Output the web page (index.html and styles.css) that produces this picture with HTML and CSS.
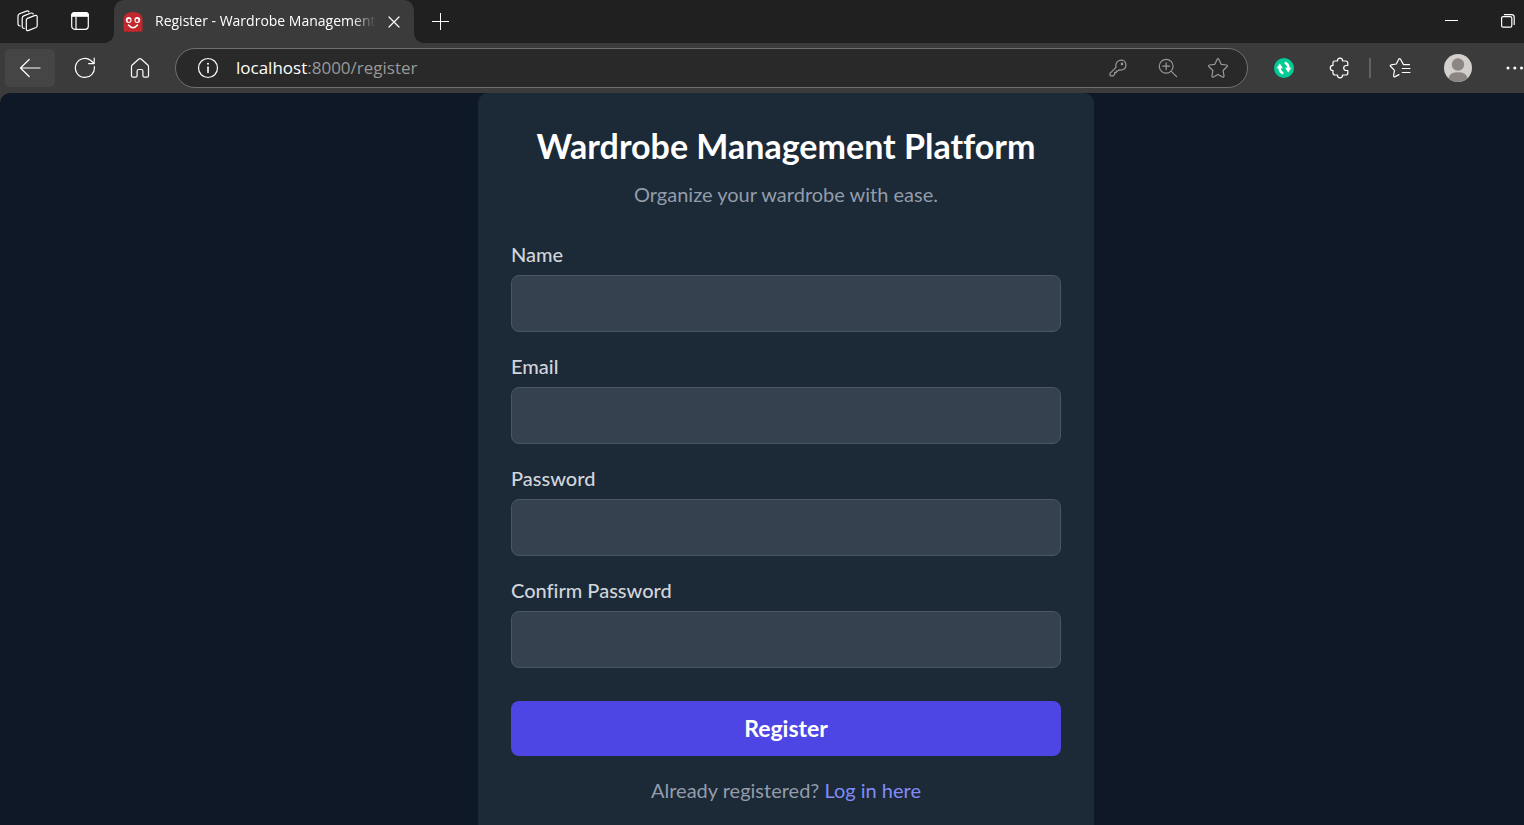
FILE: index.html
```
<!DOCTYPE html>
<html lang="en">
<head>
<meta charset="utf-8">
<meta name="viewport" content="width=device-width, initial-scale=1">
<title>Register - Wardrobe Management Platform</title>
<link rel="stylesheet" href="styles.css">
</head>
<body>
<div class="browser">
  <header class="tab-strip">
    <button class="strip-button" aria-label="Workspaces">
      <svg class="icon" width="24" height="24" viewBox="0 0 24 24"><path d="M11.500 9.400 18.500 6.600Q21.200 5.700 21.200 8V16.500Q21.200 17.900 20 18.500L12.700 21.400Q10.300 22.100 10.300 20V11.200Q10.300 10 11.500 9.400Z"/><path d="M8.300 19.300Q6.200 19.400 6.200 17.300V9.200Q6.200 7.600 7.700 6.900L14.500 4.200Q16.300 3.600 17.200 4.900"/><path d="M4.200 17Q2 16.900 2 14.800V7Q2 5.500 3.500 4.800L10.400 2.100Q12.100 1.500 13 2.800"/></svg>
    </button>
    <button class="strip-button strip-button-wide" aria-label="Tab actions">
      <svg class="icon" width="20" height="20" viewBox="0 0 20 20"><rect x="1.700" y="1.700" width="16.600" height="16.600" rx="3"/><path class="solid" d="M1.700 5.200V4.500Q1.700 1.700 4.500 1.700H15.500Q18.300 1.700 18.300 4.500V5.200Z"/><path d="M6 6V18"/></svg>
    </button>
    <div class="tab">
      <svg class="favicon" width="20" height="20" viewBox="0 0 20 20"><path fill="#c1272d" d="M.500 8Q.500 0 10 0T19.500 8V18.500Q18 21 15.800 19Q14 21 12.500 19.300Q10 21 8 19.300Q6 21 4.200 19Q2 21 .500 18.500Z"/><circle cx="5.700" cy="8" r="2.900" fill="#fff"/><circle cx="14.300" cy="8" r="2.900" fill="#fff"/><circle cx="6" cy="8.500" r="1.400" fill="#c1272d"/><circle cx="14" cy="8.500" r="1.400" fill="#c1272d"/><path d="M5.500 13Q10 18.500 14.500 13" fill="none" stroke="#fff" stroke-width="1.500" stroke-linecap="round"/></svg>
      <span class="tab-title">Register - Wardrobe Management</span>
      <button class="tab-close" aria-label="Close tab">
        <svg class="icon" width="12" height="12" viewBox="0 0 12 12"><path d="M1 1 11 11M11 1 1 11"/></svg>
      </button>
    </div>
    <button class="new-tab" aria-label="New tab">
      <svg class="icon crisp" width="17" height="17" viewBox="0 0 17 17"><path d="M8.500 0V17M0 8.500H17"/></svg>
    </button>
    <div class="window-controls">
      <button aria-label="Minimize"><svg class="icon crisp" width="14" height="14" viewBox="0 0 14 14"><path d="M0 6.500H13"/></svg></button>
      <button aria-label="Restore"><svg class="icon" width="14" height="14" viewBox="0 0 14 14"><rect x=".600" y="2.600" width="10.200" height="10.600" rx="1.500"/><path d="M3.300 .600H10.500Q13.200 .600 13.200 3.300V10.500"/></svg></button>
    </div>
  </header>

  <nav class="toolbar" aria-label="Browser toolbar">
    <button class="nav-button nav-back" aria-label="Back"><svg class="icon" width="22" height="20" viewBox="0 0 22 20"><path d="M10.200 1.500 1.500 10 10.200 18.500M1.500 10H21"/></svg></button>
    <button class="nav-button" aria-label="Refresh"><svg class="icon" width="22" height="22" viewBox="0 0 22 22"><path d="M20.300 9.500A9.500 9.500 0 1 1 16.800 3.500L20 6.500M20.200 1.200V6.600H14.600"/></svg></button>
    <button class="nav-button" aria-label="Home"><svg class="icon" width="20" height="22" viewBox="0 0 20 22"><path d="M1.500 9.600Q1.500 8.700 2.200 8L8.900 2Q10 1.200 11.100 2L17.800 8Q18.500 8.700 18.500 9.600V18.700Q18.500 20.200 17 20.200H14.400Q12.900 20.200 12.900 18.700V14Q12.900 12.500 11.400 12.500H8.600Q7.100 12.500 7.100 14V18.700Q7.100 20.200 5.600 20.200H3Q1.500 20.200 1.500 18.700Z"/></svg></button>

    <div class="address-bar">
      <button class="site-info" aria-label="Site information"><svg class="icon" width="22" height="22" viewBox="0 0 22 22"><circle cx="11" cy="11" r="9.500"/><path class="stem" d="M11 10V15.500"/><circle class="solid-dot" cx="11" cy="6.800" r="1"/></svg></button>
      <span class="url"><span class="host">localhost</span>:8000/register</span>
      <div class="address-actions">
        <button aria-label="Passwords"><svg class="icon" width="18" height="18" viewBox="0 0 18 18"><path d="M7 8.300Q6.200 4.900 8.400 2.700T13.600 1.200Q16.900 2.200 16.900 6T13.700 10.700Q11.800 11.400 9.900 10.900L8.700 12.100H7.200V13.700H5.600V15.300L4.200 16.900H2Q1 16.900 1 15.900V14.300Z"/><circle cx="13" cy="4.900" r=".700"/></svg></button>
        <button aria-label="Zoom"><svg class="icon" width="20" height="20" viewBox="0 0 20 20"><circle cx="8.200" cy="8.200" r="6.900"/><path d="M13.300 13.300 18.600 18.600M8.200 4.800V11.600M4.800 8.200H11.600"/></svg></button>
        <button aria-label="Add to favorites"><svg class="icon" width="22" height="22" viewBox="0 0 22 22"><path d="M10.100 2.400Q11 .900 11.900 2.400L14.200 7.300 19.500 8Q21.200 8.400 20 9.700L16.100 13.500 17 18.900Q17.100 20.600 15.600 20L11 17.400 6.400 20Q4.900 20.600 5 18.900L5.900 13.500 2 9.700Q.800 8.400 2.500 8L7.800 7.300Z"/></svg></button>
      </div>
    </div>

    <div class="toolbar-actions">
      <button aria-label="Sync extension"><svg width="20" height="20" viewBox="0 0 20 20"><circle cx="10" cy="10" r="10" fill="#00cc96"/><g fill="none" stroke="#fff" stroke-width="2.600"><path d="M9.300 15.200Q5.600 14.200 5.600 9.500"/><path d="M10.700 4.800Q14.400 5.800 14.400 10.500"/></g><path fill="#fff" d="M2.600 10.300 5.800 5.600 9 10.300ZM11 9.700H17.400L14.200 14.400Z"/></svg></button>
      <button aria-label="Extensions"><svg class="icon" width="22" height="22" viewBox="0 0 22 22"><path d="M5.500 4H8.400Q8.400 1.200 11 1.200T13.600 4H16.500Q18.800 4 18.800 6.300V8.500H17.500Q14.700 8.500 14.700 11T17.500 13.500H18.800V15.900Q18.800 18 16.700 18H13.600Q13.600 20.800 11 20.800T8.400 18H6Q4 18 4 16V13.600Q1.300 13.600 1.300 11T4 8.400V5.700Q4 4 5.500 4Z"/></svg></button>
      <span class="divider"></span>
      <button aria-label="Favorites"><svg class="icon" width="22" height="22" viewBox="0 0 22 22"><path d="M20.500 7.600H14.500L11.500 2.300Q10.500 .900 9.700 2.300L7.300 7 2.200 7.800Q.500 8.300 1.700 9.500L5.500 13.300 4.600 18.500Q4.600 20.300 6.100 19.600L10 17.600M13.300 11.500H21M13.300 15.500H21"/></svg></button>
      <button class="profile" aria-label="Profile"><svg width="28" height="28" viewBox="0 0 28 28"><circle cx="14" cy="14" r="14" fill="#d2cfcc"/><circle cx="14" cy="10.500" r="6.200" fill="#8b8683"/><path fill="#8b8683" d="M4.500 24.200Q5.500 18.300 14 18.300T23.500 24.200Q19.500 28 14 28T4.500 24.200Z"/></svg></button>
      <button class="more" aria-label="Settings and more"><svg width="18" height="4" viewBox="0 0 18 4" fill="#fff"><circle cx="2" cy="2" r="1.500"/><circle cx="8.800" cy="2" r="1.500"/><circle cx="15.500" cy="2" r="1.500"/></svg></button>
    </div>
  </nav>

  <main class="page">
    <section class="card">
      <h1 class="title">Wardrobe Management Platform</h1>
      <p class="subtitle">Organize your wardrobe with ease.</p>
      <form class="form">
        <div class="field"><label for="name">Name</label><input id="name" type="text" autocomplete="name"></div>
        <div class="field"><label for="email">Email</label><input id="email" type="email" autocomplete="email"></div>
        <div class="field"><label for="password">Password</label><input id="password" type="password" autocomplete="new-password"></div>
        <div class="field"><label for="confirm">Confirm Password</label><input id="confirm" type="password" autocomplete="new-password"></div>
        <button class="submit" type="submit">Register</button>
      </form>
      <p class="login">Already registered? <a href="#">Log in here</a></p>
    </section>
  </main>
</div>
</body>
</html>
```
FILE: styles.css
```
* { box-sizing: border-box; }

body {
  margin: 0;
  background: #3b3b3b;
  color: #fff;
  font-family: "Open Sans", "Noto Sans", sans-serif;
}

button {
  display: flex;
  align-items: center;
  justify-content: center;
  padding: 0;
  border: 0;
  background: none;
  color: inherit;
  font: inherit;
  cursor: pointer;
}

.browser {
  display: flex;
  flex-direction: column;
  height: 100vh;
  overflow: hidden;
}

.icon {
  fill: none;
  stroke: currentColor;
  stroke-width: 1.2;
  stroke-linecap: round;
  stroke-linejoin: round;
}

.icon .solid,
.icon .solid-dot { fill: currentColor; }
.icon .solid-dot { stroke: none; }

.crisp {
  shape-rendering: crispEdges;
  stroke-width: 1;
}

/* Tab strip */
.tab-strip {
  display: flex;
  flex: none;
  height: 43px;
  padding-bottom: 1px;
  background: #202020;
}

.strip-button { width: 56px; }
.strip-button-wide { width: 48px; margin-right: 10px; }

.tab {
  position: relative;
  display: flex;
  align-items: center;
  width: 300px;
  height: 43px;
  padding: 0 12px 2px 9px;
  border-radius: 10px 10px 0 0;
  background: #3b3b3b;
}

.tab::before,
.tab::after {
  content: "";
  position: absolute;
  bottom: 0;
  width: 10px;
  height: 10px;
}

.tab::before {
  right: 100%;
  background: radial-gradient(circle at 0 0, transparent 10px, #3b3b3b 10px);
}

.tab::after {
  left: 100%;
  background: radial-gradient(circle at 100% 0, transparent 10px, #3b3b3b 10px);
}

.favicon { margin-top: 3px; }

.tab-title {
  flex: 1;
  margin-left: 12px;
  overflow: hidden;
  font-size: 14px;
  line-height: 20px;
  white-space: nowrap;
  mask-image: linear-gradient(to right, #000 calc(100% - 24px), transparent);
}

.tab-close { width: 16px; margin-top: 2px; margin-left: 10px; }
.new-tab { width: 53px; }

.window-controls {
  display: flex;
  margin-left: auto;
}

.window-controls button { width: 57px; }
.window-controls button:last-child { width: 32px; margin-left: 12px; }

/* Toolbar */
.toolbar {
  display: flex;
  flex: none;
  align-items: center;
  height: 50px;
  padding-left: 5px;
}

.nav-button {
  width: 50px;
  height: 38px;
  margin-right: 5px;
  border-radius: 5px;
}

.nav-back { background: #454545; }

.address-bar {
  display: flex;
  flex: 1;
  align-items: center;
  height: 40px;
  margin-left: 5px;
  padding: 0 4px 0 21px;
  border: 1px solid #707070;
  border-radius: 20px;
  background: #292929;
}

.site-info .stem { stroke-width: 1.6; }

.url {
  flex: 1;
  margin-left: 17px;
  color: #999;
  font-size: 17px;
  line-height: 24px;
}

.host { color: #fff; }

.address-actions {
  display: flex;
  color: #999;
}

.address-actions button { width: 50px; height: 36px; }

.toolbar-actions {
  display: flex;
  align-items: center;
  margin-left: 8px;
}

.toolbar-actions button { width: 56px; height: 38px; }

.divider {
  width: 2px;
  height: 20px;
  margin: 0 1px;
  background: #626262;
}

.toolbar-actions .profile { margin-left: 2px; }
.toolbar-actions .more { width: 38px; justify-content: flex-end; }

/* Registration page */
.page {
  display: flex;
  flex: 1;
  justify-content: center;
  padding-left: 48px;
  overflow: hidden;
  border-top-left-radius: 10px;
  background: #0f1827;
  font-family: Lato, "Open Sans", sans-serif;
  font-variant-ligatures: none;
}

.card {
  width: 616px;
  padding: 31px 33px;
  border-radius: 10px 10px 0 0;
  background: #1c2936;
}

.title {
  margin: 0;
  font-size: 34px;
  font-weight: 700;
  line-height: 44px;
  text-align: center;
  white-space: nowrap;
}

.subtitle {
  margin: 12px 0 32px;
  color: #929cab;
  font-size: 20px;
  line-height: 28px;
  text-align: center;
}

.form {
  display: flex;
  flex-direction: column;
  gap: 20px;
}

.field {
  display: flex;
  flex-direction: column;
  gap: 7px;
}

.field label {
  color: #d1d5db;
  font-size: 20px;
  font-weight: 500;
  line-height: 28px;
}

.field input {
  height: 57px;
  padding: 0 16px;
  border: 1px solid #4b5563;
  border-radius: 8px;
  background: #364150;
  color: #fff;
  font: inherit;
  font-size: 20px;
}

.submit {
  height: 55px;
  margin-top: 13px;
  padding-bottom: 2px;
  border-radius: 8px;
  background: #4d46e4;
  font-size: 23px;
  font-weight: 700;
}

.login {
  margin: 20px 0 0;
  color: #929cab;
  font-size: 20px;
  line-height: 28px;
  text-align: center;
}

.login a {
  color: #818cf8;
  text-decoration: none;
}
```
